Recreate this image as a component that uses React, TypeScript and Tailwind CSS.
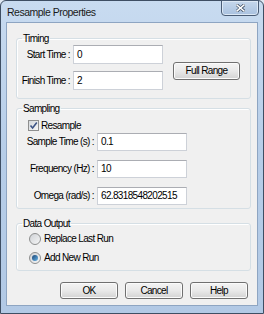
function TextBox({ value, h = "h-[19px]" }: { value: string; h?: string }) {
  return (
    <div
      className={`w-[90px] ${h} shrink-0 bg-white border border-[#cdd1d8] border-t-[#abadb3] flex items-center pl-[3px] leading-none whitespace-nowrap overflow-hidden`}
    >
      {value}
    </div>
  );
}

function Btn({ label, w = "w-[58px]", h = "h-[17px]" }: { label: string; w?: string; h?: string }) {
  return (
    <button
      className={`${w} ${h} rounded-[3px] border border-[#707070] bg-gradient-to-b from-[#f4f4f4] via-[#e9e9e9] to-[#d3d3d3] leading-none text-black flex items-center justify-center shadow-[inset_0_0_0_1px_#fbfbfb]`}
    >
      {label}
    </button>
  );
}

function Field({ label, labelW, value, h }: { label: string; labelW: string; value: string; h?: string }) {
  return (
    <div className="flex items-center gap-[3px]">
      <div className={`${labelW} shrink-0 flex justify-end whitespace-nowrap leading-none`}>{label}</div>
      <TextBox value={value} h={h} />
    </div>
  );
}

function Radio({ label, checked }: { label: string; checked?: boolean }) {
  return (
    <div className="h-[13px] flex items-center gap-[3px] pl-[12px]">
      <span className="w-[12px] h-[12px] rounded-full border border-[#8e8f8f] bg-gradient-to-br from-[#cfd2d6] to-[#f6f6f6] flex items-center justify-center">
        {checked && (
          <span className="w-[6px] h-[6px] rounded-full bg-gradient-to-br from-[#1a4576] to-[#69b6e8]" />
        )}
      </span>
      <span className="leading-none whitespace-nowrap">{label}</span>
    </div>
  );
}

export default function App() {
  return (
    <div className="w-[264px] h-[314px] bg-[#dfe8f3] text-black text-[10px] tracking-[-0.65px] font-['Liberation_Sans',Arial,sans-serif]">
      <div className="h-full flex flex-col rounded-t-[6px] border border-[#3e4e63] bg-gradient-to-b from-[#c8dbf0] via-[#b6cde8] to-[#b2c9e5] pl-[5px] pr-[5px] pb-[7px]">
        {/* Title bar */}
        <div className="h-[21px] flex items-start justify-between">
          <span className="pt-[4px] pl-[1px] text-[10.5px] tracking-[-0.5px] leading-[14px] text-[#1a1a1a]">Resample Properties</span>
          <div className="w-[38px] h-[16px] -mt-px mr-[-1px] rounded-b-[4px] border border-[#4a5c75] bg-gradient-to-b from-[#c5d7ec] to-[#a9c1df] shadow-[inset_0_0_0_1px_#dce8f5] flex items-center justify-center">
            <svg width="9" height="8" viewBox="0 0 9 8">
              <path d="M1 1 L8 7 M8 1 L1 7" stroke="#3a4a60" strokeWidth="3" strokeLinecap="square" />
              <path d="M1 1 L8 7 M8 1 L1 7" stroke="#ffffff" strokeWidth="1.6" strokeLinecap="square" />
            </svg>
          </div>
        </div>

        {/* Client area */}
        <div className="flex-1 flex flex-col bg-[#f0f0f0] border border-[#8ea5c2] pl-[9px] pr-[6px]">
          {/* Timing */}
          <fieldset className="mt-[9px] h-[67px] rounded-[3px] border border-[#d5dfe5] shadow-[inset_1px_1px_0_#fff]">
            <legend className="ml-[5px] px-[1px] leading-[13px]">Timing</legend>
            <div className="flex items-start">
              <div className="flex flex-col gap-[7px]">
                <Field label="Start Time :" labelW="w-[53px]" value="0" />
                <Field label="Finish Time :" labelW="w-[53px]" value="2" />
              </div>
              <div className="ml-[10px] mt-[17px]">
                <Btn label="Full Range" w="w-[67px]" h="h-[18px]" />
              </div>
            </div>
          </fieldset>

          {/* Sampling */}
          <fieldset className="mt-[3px] h-[107px] rounded-[3px] border border-[#d5dfe5] shadow-[inset_1px_1px_0_#fff]">
            <legend className="ml-[5px] px-[1px] leading-[13px]">Sampling</legend>
            <div className="mt-[4px] h-[13px] flex items-center gap-[2px] pl-[11px]">
              <span className="w-[11px] h-[11px] border border-[#8e8f8f] bg-gradient-to-br from-[#d4d8dc] to-[#f7f7f7] flex items-center justify-center">
                <svg width="9" height="9" viewBox="0 0 9 9">
                  <path d="M1.5 4.5 L3.6 7 L7.8 1.5" fill="none" stroke="#3d5485" strokeWidth="1.6" />
                </svg>
              </span>
              <span className="leading-none">Resample</span>
            </div>
            <div className="mt-px flex flex-col gap-[9px]">
              <Field label="Sample Time (s) :" labelW="w-[77px]" value="0.1" h="h-[18px]" />
              <Field label="Frequency (Hz) :" labelW="w-[77px]" value="10" h="h-[18px]" />
              <Field label="Omega (rad/s) :" labelW="w-[77px]" value="62.8318548202515" h="h-[18px]" />
            </div>
          </fieldset>

          {/* Data Output */}
          <fieldset className="mt-[8px] h-[54px] rounded-[3px] border border-[#d5dfe5] shadow-[inset_1px_1px_0_#fff]">
            <legend className="ml-[5px] px-[1px] leading-[13px]">Data Output</legend>
            <div className="mt-[2px] flex flex-col gap-[6px]">
              <Radio label="Replace Last Run" />
              <Radio label="Add New Run" checked />
            </div>
          </fieldset>

          {/* Buttons */}
          <div className="mt-[11px] flex justify-end gap-[7px] pr-[3px]">
            <Btn label="OK" />
            <Btn label="Cancel" />
            <Btn label="Help" />
          </div>
        </div>
      </div>
    </div>
  );
}
